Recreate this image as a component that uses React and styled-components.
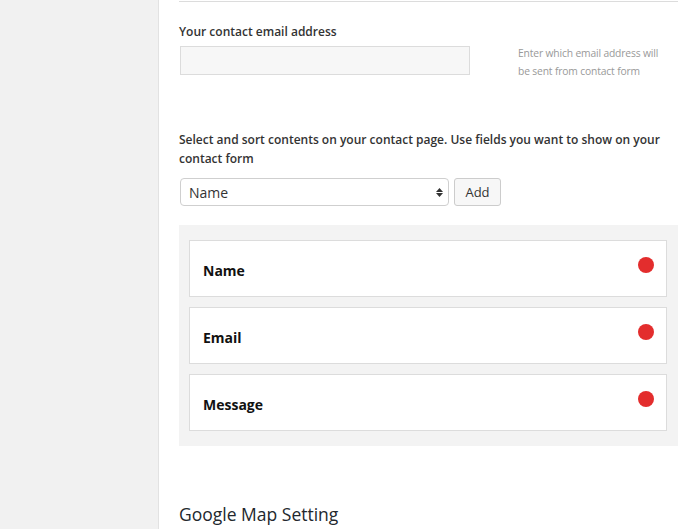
import React from "react";
import styled, { createGlobalStyle } from "styled-components";

const GlobalStyle = createGlobalStyle`
  html, body {
    margin: 0;
    padding: 0;
    background: #fff;
    font-family: "Open Sans", "Liberation Sans", sans-serif;
    color: #444;
  }
`;

const Page = styled.div`
  display: flex;
  height: 529px;
  overflow: hidden;
`;

const Sidebar = styled.aside`
  width: 158px;
  flex-shrink: 0;
  background: #f1f1f1;
  border-right: 1px solid #e2e2e2;
`;

const Main = styled.main`
  width: 499px;
  padding-left: 20px;
`;

const Divider = styled.hr`
  margin: 1px 0 0;
  border: 0;
  border-top: 1px solid #dcdcdc;
`;

const Label = styled.div`
  font-size: 12px;
  font-weight: 600;
  color: #333;
  line-height: 19px;
`;

const EmailRow = styled.div`
  display: flex;
  align-items: flex-start;
  margin-top: 5px;
`;

const TextInput = styled.input`
  box-sizing: border-box;
  width: 290px;
  height: 29px;
  margin-left: 1px;
  background: #f7f7f7;
  border: 1px solid #dcdcdc;
  outline: none;
`;

const Help = styled.p`
  margin: -2px 0 0 48px;
  font-size: 10.3px;
  letter-spacing: -0.15px;
  line-height: 18px;
  color: #999;
  width: 150px;
`;

const FieldsBlock = styled.div`
  margin-top: 50px;
`;

const Controls = styled.div`
  display: flex;
  gap: 5px;
  margin-top: 10px;
  margin-left: 1px;
`;

const SelectBox = styled.div`
  box-sizing: border-box;
  width: 269px;
  height: 28px;
  border: 1px solid #cfcfcf;
  border-radius: 4px;
  display: flex;
  align-items: center;
  justify-content: space-between;
  padding: 0 5px 0 8px;
  font-size: 14px;
  color: #333;
`;

const Arrows = styled.span`
  display: flex;
  flex-direction: column;
  align-items: center;
  gap: 1px;
`;

const Button = styled.button`
  box-sizing: border-box;
  height: 28px;
  width: 47px;
  background: #f7f7f7;
  border: 1px solid #cccccc;
  border-radius: 3px;
  font-family: inherit;
  font-size: 13px;
  color: #333;
  padding: 0;
`;

const Panel = styled.div`
  margin-top: 19px;
  background: #f3f3f3;
  padding: 15px 11px 15px 10px;
  display: flex;
  flex-direction: column;
  gap: 10px;
`;

const Item = styled.div`
  position: relative;
  box-sizing: border-box;
  height: 57px;
  background: #fff;
  border: 1px solid #dcdcdc;
  display: flex;
  align-items: center;
  padding: 3px 0 0 13px;
  font-size: 14px;
  font-weight: 700;
  color: #111;
`;

const Dot = styled.span`
  position: absolute;
  top: 16px;
  right: 12px;
  width: 16px;
  height: 16px;
  border-radius: 50%;
  background: #e32d2d;
`;

const Heading = styled.h2`
  margin: 56px 0 0;
  font-size: 17.5px;
  font-weight: 400;
  color: #23282d;
  line-height: 24px;
`;

const fields = ["Name", "Email", "Message"];

function App() {
  return (
    <Page>
      <GlobalStyle />
      <Sidebar />
      <Main>
        <Divider />
        <Label style={{ marginTop: 20 }}>Your contact email address</Label>
        <EmailRow>
          <TextInput type="text" />
          <Help>Enter which email address will be sent from contact form</Help>
        </EmailRow>
        <FieldsBlock>
          <Label>
            Select and sort contents on your contact page. Use fields you want to
            show on your contact form
          </Label>
          <Controls>
            <SelectBox>
              <span>Name</span>
              <Arrows>
                <svg width="7" height="4" viewBox="0 0 7 4">
                  <path d="M0 4 L3.5 0 L7 4 Z" fill="#333" />
                </svg>
                <svg width="7" height="4" viewBox="0 0 7 4">
                  <path d="M0 0 L3.5 4 L7 0 Z" fill="#333" />
                </svg>
              </Arrows>
            </SelectBox>
            <Button>Add</Button>
          </Controls>
        </FieldsBlock>
        <Panel>
          {fields.map((f) => (
            <Item key={f}>
              {f}
              <Dot />
            </Item>
          ))}
        </Panel>
        <Heading>Google Map Setting</Heading>
      </Main>
    </Page>
  );
}

export default App;
